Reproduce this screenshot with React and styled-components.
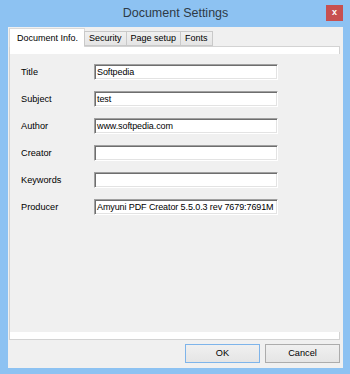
import React from 'react';
import styled, { createGlobalStyle } from 'styled-components';

const GlobalStyle = createGlobalStyle`
    html, body {
        margin: 0;
        padding: 0;
    }
    body {
        background: #8dc2f2;
        font-family: "Liberation Sans", Arial, sans-serif;
    }
`

const Window = styled.div`
    width: 350px;
    height: 374px;
    box-sizing: border-box;
    background: #8dc2f2;
    padding: 0 7px 6px 8px;
    display: flex;
    flex-direction: column;
`

const TitleBar = styled.div`
    height: 27px;
    flex-shrink: 0;
    display: grid;
    grid-template-columns: 1fr auto 1fr;
    align-items: start;
`

const Caption = styled.span`
    grid-column: 2;
    padding-top: 5px;
    font-size: 12.5px;
    line-height: 16px;
    color: #2e3a46;
`

const CloseButton = styled.div`
    grid-column: 3;
    justify-self: end;
    margin-top: 5px;
    width: 17px;
    height: 16px;
    background: #c75050;
    color: #fff;
    font-size: 9px;
    font-weight: bold;
    line-height: 15px;
    text-align: center;
`

const Client = styled.div`
    flex: 1;
    background: #f0f0f0;
    padding: 1px 0 0 1px;
    display: flex;
    flex-direction: column;
`

const TabStrip = styled.div`
    display: flex;
    align-items: flex-end;
    height: 18px;
    position: relative;
    z-index: 1;
`

const Tab = styled.div`
    box-sizing: border-box;
    height: ${p => p.active ? '19px' : '15px'};
    margin-bottom: ${p => p.active ? '-1px' : '0'};
    margin-left: ${p => p.first ? '0' : '-1px'};
    padding: ${p => p.active ? '0 6px 0 7px' : '0 4px'};
    background: ${p => p.active ? '#fff' : 'linear-gradient(#f0f0f0, #e5e5e5)'};
    border: 1px solid ${p => p.active ? '#d9d9d9' : '#c9c9c9'};
    border-bottom: ${p => p.active ? 'none' : '1px solid #c9c9c9'};
    font-size: 9px;
    line-height: ${p => p.active ? '18px' : '13px'};
    color: #000;
    white-space: nowrap;
`

const TabPanel = styled.div`
    width: 331px;
    height: 294px;
    box-sizing: border-box;
    background: #fff;
    border: 1px solid #d3d3d3;
    padding: 7px 0;
    display: flex;
`

const Page = styled.div`
    flex: 1;
    margin-right: -4px;
    background: #f0f0f0;
    padding: 10px 0 0 11px;
`

const Form = styled.div`
    display: grid;
    grid-template-columns: 73px 184px;
    grid-auto-rows: 16px;
    row-gap: 11px;
    align-items: center;
`

const Label = styled.span`
    font-size: 9.2px;
    line-height: 16px;
    color: #000;
`

const Field = styled.div`
    box-sizing: border-box;
    height: 16px;
    background: #fff;
    border-top: 1px solid #a0a0a0;
    border-left: 1px solid #a0a0a0;
    border-right: 1px solid #fff;
    border-bottom: 1px solid #fff;
    box-shadow: inset 1px 1px 0 #6e6e6e, inset -1px -1px 0 #e3e3e3;
    padding: 0 0 0 2px;
    font-size: 9px;
    letter-spacing: -0.1px;
    line-height: 14px;
    color: #000;
    white-space: nowrap;
    overflow: hidden;
`

const ButtonRow = styled.div`
    width: 331px;
    margin-top: 4px;
    display: flex;
    justify-content: flex-end;
    gap: 5px;
`

const Button = styled.div`
    box-sizing: border-box;
    width: 75px;
    height: 19px;
    background: linear-gradient(#f0f0f0, #e5e5e5);
    border: 1px solid ${p => p.primary ? '#7eb4ea' : '#acacac'};
    font-size: 9.2px;
    line-height: 17px;
    text-align: center;
    color: #000;
`

const fields = [
    ['Title', 'Softpedia'],
    ['Subject', 'test'],
    ['Author', 'www.softpedia.com'],
    ['Creator', ''],
    ['Keywords', ''],
    ['Producer', 'Amyuni PDF Creator 5.5.0.3 rev 7679:7691M'],
]

const tabs = ['Document Info.', 'Security', 'Page setup', 'Fonts']

export default function App() {
    return (
        <>
            <GlobalStyle />
            <Window>
                <TitleBar>
                    <Caption>Document Settings</Caption>
                    <CloseButton>x</CloseButton>
                </TitleBar>
                <Client>
                    <TabStrip>
                        {tabs.map((t, i) => (
                            <Tab key={t} active={i === 0} first={i === 0}>{t}</Tab>
                        ))}
                    </TabStrip>
                    <TabPanel>
                        <Page>
                            <Form>
                                {fields.map(([label, value]) => (
                                    <React.Fragment key={label}>
                                        <Label>{label}</Label>
                                        <Field>{value}</Field>
                                    </React.Fragment>
                                ))}
                            </Form>
                        </Page>
                    </TabPanel>
                    <ButtonRow>
                        <Button primary>OK</Button>
                        <Button>Cancel</Button>
                    </ButtonRow>
                </Client>
            </Window>
        </>
    )
}
